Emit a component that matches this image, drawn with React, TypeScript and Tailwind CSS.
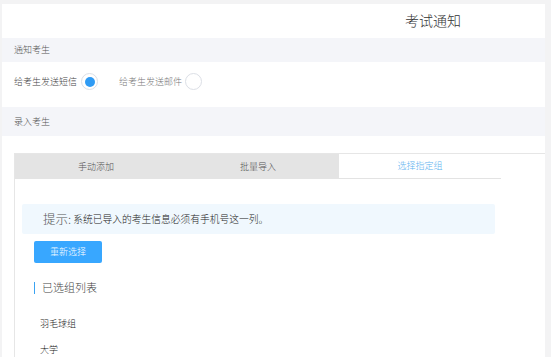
import React from "react";

const TABS = ["手动添加", "批量导入", "选择指定组"];
const GROUPS = ["羽毛球组", "大学"];

function Radio({ checked }: { checked: boolean }) {
  return (
    <span className="w-[17px] h-[17px] rounded-full border border-[#dcdfe6] bg-white flex items-center justify-center">
      {checked && <span className="w-[10px] h-[10px] rounded-full bg-[#2f9bf4]" />}
    </span>
  );
}

export default function App() {
  return (
    <div
      className="w-[551px] h-[357px] overflow-hidden bg-[#f3f3f4] pt-[4px] pl-[2px] pr-[6px] font-light"
      style={{ fontFamily: '"Noto Sans CJK SC", "Noto Sans", sans-serif' }}
    >
      {/* Header */}
      <div className="h-[34px] bg-white pl-[403px] pt-[3px]">
        <span className="text-[14px] leading-[20px] text-[#333]">考试通知</span>
      </div>

      {/* Notify section */}
      <div className="h-[24px] bg-[#f4f5f9] flex items-center pl-[12px] text-[9px] text-[#555]">通知考生</div>
      <div className="h-[45px] bg-white flex items-start pl-[12px] pt-[11px] text-[9px] text-[#777]">
        <label className="flex items-center gap-[4px]">
          <span className="text-[#444]">给考生发送短信</span>
          <Radio checked />
        </label>
        <label className="flex items-center gap-[3px] ml-[21px]">
          <span>给考生发送邮件</span>
          <Radio checked={false} />
        </label>
      </div>

      {/* Import section */}
      <div className="h-[29px] bg-[#f4f5f9] flex items-center pl-[12px] text-[9px] text-[#555]">录入考生</div>
      <div className="bg-white pl-[12px] pt-[17px] h-[221px]">
        <div className="h-full border-t border-l border-[#e6e6e6]">
          {/* Tabs */}
          <div className="flex w-[486px] h-[25px]">
            {TABS.map((t, i) => (
              <div
                key={t}
                className={
                  i === 2
                    ? "flex-1 flex items-center justify-center bg-white border-b border-[#e3e3e3] text-[9px] text-[#5cb2ef]"
                    : "flex-1 flex items-center justify-center bg-[#e4e4e4] text-[9px] text-[#555]"
                }
              >
                {t}
              </div>
            ))}
          </div>

          <div className="pl-[7px] pt-[25px]">
            {/* Hint */}
            <div className="w-[473px] h-[30px] bg-[#f0f8fe] rounded-[2px] flex items-center pl-[21px]">
              <span className="text-[12.5px] text-[#555]">提示:</span>
              <span className="ml-[2px] text-[9.75px] text-[#222]">系统已导入的考生信息必须有手机号这一列。</span>
            </div>

            <button className="mt-[7px] ml-[12px] w-[68px] h-[22px] rounded-[2px] bg-[#38a7ff] text-white text-[9px] flex items-center justify-center">
              重新选择
            </button>

            <div className="mt-[19px] ml-[12px] flex items-center h-[11px]">
              <span className="w-px h-[12px] bg-[#3aa3f2]" />
              <span className="ml-[7px] text-[11px] text-[#444] leading-[11px]">已选组列表</span>
            </div>

            <div className="ml-[18px] mt-[26px] flex flex-col gap-[17px] text-[9px] text-[#222]">
              {GROUPS.map((g) => (
                <div key={g} className="leading-[9px]">{g}</div>
              ))}
            </div>
          </div>
        </div>
      </div>
    </div>
  );
}
